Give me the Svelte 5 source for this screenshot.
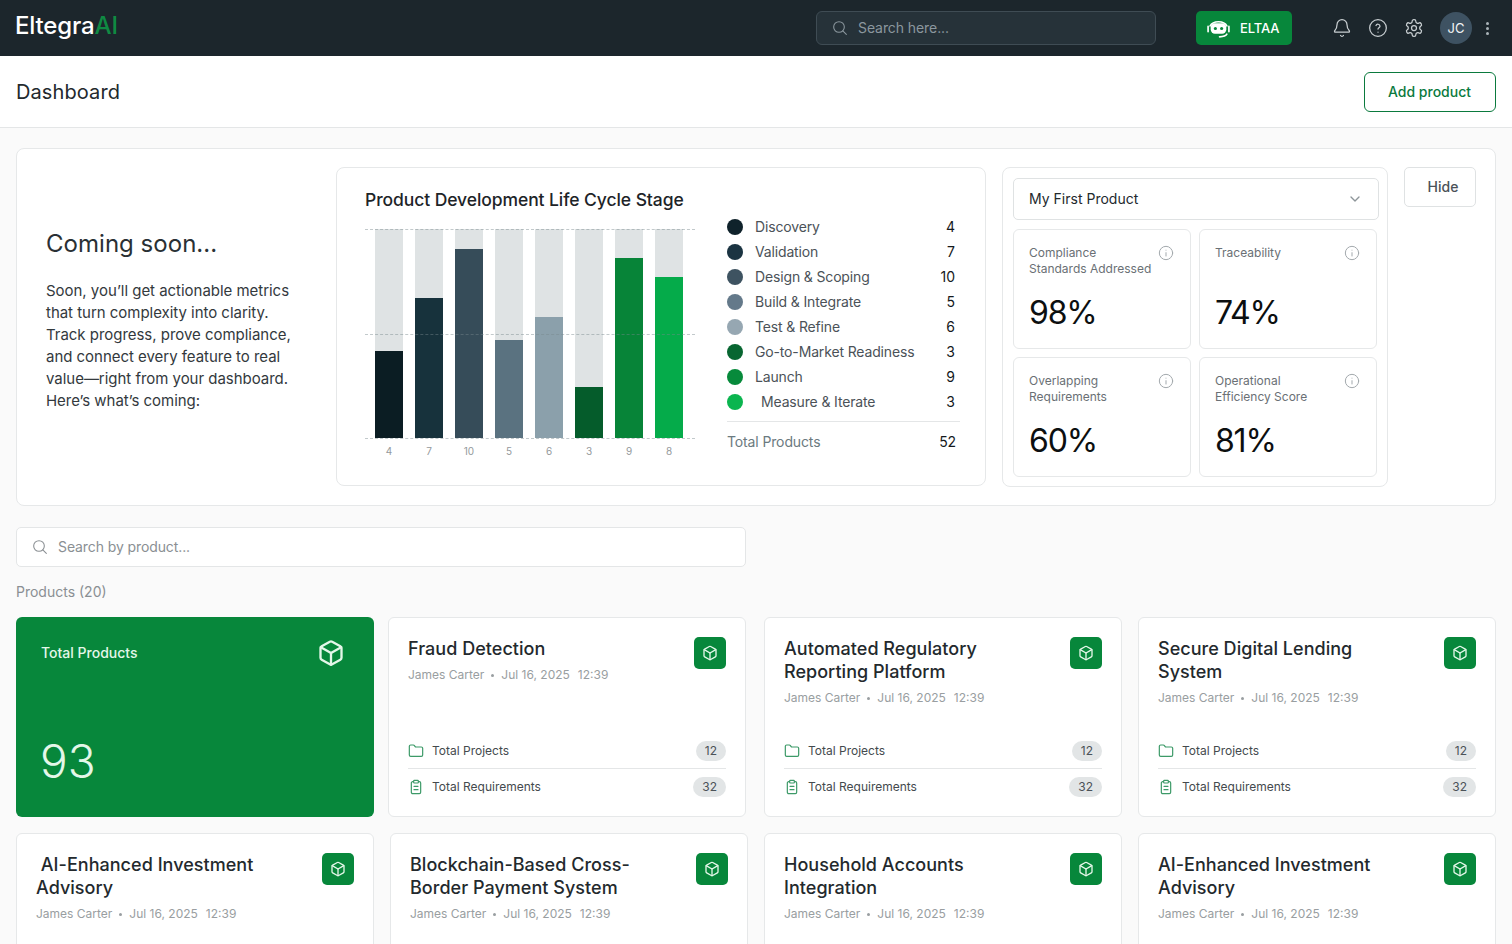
<script>
  const stages = [
    { name: 'Discovery', value: 4, fill: 87, bar: '#0b1d23', dot: '#0f222b' },
    { name: 'Validation', value: 7, fill: 140, bar: '#17323c', dot: '#1b3442' },
    { name: 'Design & Scoping', value: 10, fill: 189, bar: '#364c59', dot: '#3e5361' },
    { name: 'Build & Integrate', value: 5, fill: 98, bar: '#5a7280', dot: '#64798a' },
    { name: 'Test & Refine', value: 6, fill: 121, bar: '#8ba0ab', dot: '#96a7b2' },
    { name: 'Go-to-Market Readiness', value: 3, fill: 51, bar: '#055c2b', dot: '#086631' },
    { name: 'Launch', value: 9, fill: 180, bar: '#078438', dot: '#078a3b' },
    { name: 'Measure & Iterate', value: 3, axis: 8, fill: 161, bar: '#05ab4a', dot: '#0bb54f', cls: 'indented' }
  ];
  const metrics = [
    { label: ['Compliance', 'Standards Addressed'], value: '98%' },
    { label: ['Traceability'], value: '74%' },
    { label: ['Overlapping', 'Requirements'], value: '60%' },
    { label: ['Operational', 'Efficiency Score'], value: '81%' }
  ];
  const rowOne = [
    { title: 'Fraud Detection', cls: 'gap-14' },
    { title: 'Automated Regulatory Reporting Platform', cls: 'gap-18' },
    { title: 'Secure Digital Lending System', cls: 'gap-16' }
  ];
  const rowTwo = [
    { title: '\u00a0AI-Enhanced Investment Advisory', cls: '' },
    { title: 'Blockchain-Based Cross-Border Payment System', cls: '' },
    { title: 'Household Accounts Integration', cls: '' },
    { title: 'AI-Enhanced Investment Advisory', cls: '' }
  ];
</script>

{#snippet box(size)}
  <svg width={size} height={size} viewBox="0 0 24 24" fill="none" stroke="currentColor" stroke-width="2" stroke-linecap="round" stroke-linejoin="round">
    <path d="M21 8a2 2 0 0 0-1-1.730l-7-4a2 2 0 0 0-2 0l-7 4A2 2 0 0 0 3 8v8a2 2 0 0 0 1 1.730l7 4a2 2 0 0 0 2 0l7-4A2 2 0 0 0 21 16Z"/>
    <path d="m3.300 7 8.700 5 8.700-5"/><path d="M12 22V12"/>
  </svg>
{/snippet}

{#snippet searchIcon(size)}
  <svg width={size} height={size} viewBox="0 0 24 24" fill="none" stroke="currentColor" stroke-width="1.6" stroke-linecap="round" stroke-linejoin="round">
    <circle cx="10.500" cy="10.500" r="8"/><path d="m21.500 21.500-5.300-5.300"/>
  </svg>
{/snippet}

{#snippet card(p)}
  <article class="card {p.cls}">
    <div class="card-head">
      <div>
        <h3>{p.title}</h3>
        <p class="meta"><span>James Carter</span><i></i><span>Jul 16, 2025</span><span class="time">12:39</span></p>
      </div>
      <span class="tile">{@render box(16)}</span>
    </div>
    <div class="stats">
      <div class="stat">
        <svg class="stat-icon" width="16" height="16" viewBox="0 0 24 24" fill="none" stroke="currentColor" stroke-width="1.8" stroke-linecap="round" stroke-linejoin="round"><path d="M20 20a2 2 0 0 0 2-2V8a2 2 0 0 0-2-2h-7.900a2 2 0 0 1-1.690-.9L9.600 3.900A2 2 0 0 0 7.930 3H4a2 2 0 0 0-2 2v13a2 2 0 0 0 2 2Z"/></svg>
        <span>Total Projects</span><b>12</b>
      </div>
      <div class="stat">
        <svg class="stat-icon" width="16" height="16" viewBox="0 0 24 24" fill="none" stroke="currentColor" stroke-width="1.8" stroke-linecap="round" stroke-linejoin="round"><rect x="8.500" y="2" width="7" height="4" rx="1"/><path d="M16 4h1a2 2 0 0 1 2 2v14a2 2 0 0 1-2 2H7a2 2 0 0 1-2-2V6a2 2 0 0 1 2-2h1"/><path d="M9 11h6"/><path d="M9 16h6"/></svg>
        <span>Total Requirements</span><b>32</b>
      </div>
    </div>
  </article>
{/snippet}

<div class="page">
  <header class="topbar">
    <div class="logo">Eltegra<span>AI</span></div>
    <div class="top-search">{@render searchIcon(16)}<span>Search here...</span></div>
    <button class="eltaa">
      <svg width="25" height="21" viewBox="0 0 24 20" fill="none" stroke="#fff" stroke-width="1.600" stroke-linecap="round">
        <path d="M4 7.500a8.500 6 0 0 1 16 0"/>
        <rect x="4.500" y="5" width="15" height="10" rx="4" fill="#fff" stroke="none"/>
        <path d="M2 8v5M22 8v5"/>
        <path d="M20 15.500c-1 2-3 2.500-7 2.500"/>
        <circle cx="9" cy="10" r="1.500" fill="#07873b" stroke="none"/><circle cx="15" cy="10" r="1.500" fill="#07873b" stroke="none"/>
      </svg>
      <span>ELTAA</span>
    </button>
    <div class="top-icons">
      <svg width="20" height="20" viewBox="0 0 24 24" fill="none" stroke="currentColor" stroke-width="1.500" stroke-linecap="round" stroke-linejoin="round"><path d="M10.268 21a2 2 0 0 0 3.464 0"/><path d="M3.262 15.326A1 1 0 0 0 4 17h16a1 1 0 0 0 .740-1.673C19.410 13.956 18 12.499 18 8A6 6 0 0 0 6 8c0 4.499-1.411 5.956-2.738 7.326"/></svg>
      <svg width="20" height="20" viewBox="0 0 24 24" fill="none" stroke="currentColor" stroke-width="1.500" stroke-linecap="round" stroke-linejoin="round"><circle cx="12" cy="12" r="10"/><path d="M9.600 9a2.500 2.500 0 0 1 4.800.8c0 1.700-2.400 2-2.400 3.400"/><path d="M12 17h.01"/></svg>
      <svg width="20" height="20" viewBox="0 0 24 24" fill="none" stroke="currentColor" stroke-width="1.500" stroke-linecap="round" stroke-linejoin="round"><path d="M12.220 2h-.44a2 2 0 0 0-2 2v.18a2 2 0 0 1-1 1.730l-.43.25a2 2 0 0 1-2 0l-.15-.08a2 2 0 0 0-2.730.73l-.22.38a2 2 0 0 0 .73 2.730l.15.1a2 2 0 0 1 1 1.720v.51a2 2 0 0 1-1 1.740l-.15.09a2 2 0 0 0-.73 2.730l.22.38a2 2 0 0 0 2.730.73l.15-.08a2 2 0 0 1 2 0l.43.25a2 2 0 0 1 1 1.730V20a2 2 0 0 0 2 2h.44a2 2 0 0 0 2-2v-.18a2 2 0 0 1 1-1.730l.43-.25a2 2 0 0 1 2 0l.15.08a2 2 0 0 0 2.730-.73l.22-.39a2 2 0 0 0-.73-2.730l-.15-.08a2 2 0 0 1-1-1.740v-.5a2 2 0 0 1 1-1.740l.15-.09a2 2 0 0 0 .73-2.730l-.22-.38a2 2 0 0 0-2.730-.73l-.15.08a2 2 0 0 1-2 0l-.43-.25a2 2 0 0 1-1-1.730V4a2 2 0 0 0-2-2z"/><circle cx="12" cy="12" r="3"/></svg>
    </div>
    <div class="avatar">JC</div>
    <div class="kebab"><i></i><i></i><i></i></div>
  </header>

  <div class="titlebar">
    <h1>Dashboard</h1>
    <button class="add">Add product</button>
  </div>

  <main class="content">
    <section class="panel">
      <div class="intro">
        <h2>Coming soon...</h2>
        <p>Soon, you’ll get actionable metrics that turn complexity into clarity. Track progress, prove compliance, and connect every feature to real value—right from your dashboard. Here’s what’s coming:</p>
      </div>

      <div class="chart-card">
        <div class="chart-side">
          <h3 class="chart-title">Product Development Life Cycle Stage</h3>
          <div class="plot">
            <div class="bars">
              {#each stages as s}
                <div class="track"><div class="fill" style="height:{s.fill}px;background:{s.bar}"></div></div>
              {/each}
            </div>
            <div class="grid-lines"><i></i><i></i><i></i></div>
          </div>
          <div class="axis">
            {#each stages as s}<span>{s.axis ?? s.value}</span>{/each}
          </div>
        </div>
        <div class="legend">
          {#each stages as s}
            <div class="legend-row">
              <i style="background:{s.dot}"></i>
              <span class={s.cls}>{s.name}</span>
              <b>{s.value}</b>
            </div>
          {/each}
          <div class="legend-total"><span>Total Products</span><b>52</b></div>
        </div>
      </div>

      <div class="metrics-card">
        <div class="select">
          <span>My First Product</span>
          <svg width="16" height="16" viewBox="0 0 24 24" fill="none" stroke="#8d9599" stroke-width="2" stroke-linecap="round" stroke-linejoin="round"><path d="m6 9 6 6 6-6"/></svg>
        </div>
        <div class="metrics">
          {#each metrics as m}
            <div class="metric">
              <div class="metric-head">
                <div>{#each m.label as l}<div>{l}</div>{/each}</div>
                <svg width="16" height="16" viewBox="0 0 24 24" fill="none" stroke="#a3a9ad" stroke-width="1.500" stroke-linecap="round"><circle cx="12" cy="12" r="10"/><path d="M12 16.500v-5"/><path d="M12 7.800h.01"/></svg>
              </div>
              <div class="metric-value">{m.value}</div>
            </div>
          {/each}
        </div>
      </div>

      <button class="hide">Hide</button>
    </section>

    <div class="product-search">{@render searchIcon(16)}<span>Search by product...</span></div>
    <div class="count">Products (20)</div>

    <div class="row">
      <article class="total">
        <div class="total-head"><span>Total Products</span>{@render box(28)}</div>
        <div class="total-value">93</div>
      </article>
      {#each rowOne as p}{@render card(p)}{/each}
    </div>
    <div class="row second">
      {#each rowTwo as p}{@render card(p)}{/each}
    </div>
  </main>
</div>

<style>
  :global(body) { margin: 0; background: #fafafa; }
  * { box-sizing: border-box; }
  .page { height: 944px; overflow: hidden; font-family: Inter, "Liberation Sans", sans-serif; color: #23292d; background: #fafafa; }
  h1, h2, h3, p { margin: 0; }
  button { font-family: inherit; cursor: pointer; }

  .topbar { height: 56px; background: #1c262c; display: flex; align-items: center; padding: 0 20px 0 15px; }
  .logo { font-size: 24px; font-weight: 500; color: #fff; letter-spacing: -0.15px; width: 801px; padding-bottom: 6px; }
  .logo span { color: #0f8a43; }
  .top-search { width: 340px; height: 34px; display: flex; align-items: center; gap: 10px; padding: 0 0 1px 15px; background: #263239; border: 1px solid #3f4c54; border-radius: 6px; color: #8b979e; font-size: 14px; letter-spacing: -0.08px; }
  .eltaa { margin-left: 40px; width: 96px; height: 34px; border: 0; border-radius: 5px; background: #07873b; color: #fff; display: flex; align-items: center; gap: 9px; padding: 0 0 0 10px; font-size: 13px; font-weight: 500; letter-spacing: -0.1px; }
  .top-icons { margin-left: 40px; display: flex; gap: 16px; color: #c8ced1; }
  .avatar { margin-left: 16px; width: 32px; height: 32px; border-radius: 50%; background: #3e5262; color: #f2f4f5; display: flex; align-items: center; justify-content: center; font-size: 13px; font-weight: 400; }
  .kebab { margin-left: 14px; display: flex; flex-direction: column; gap: 2px; }
  .kebab i { width: 3px; height: 3px; border-radius: 50%; background: #aab3b8; }

  .titlebar { height: 72px; background: #fff; border-bottom: 1px solid #e4e6e7; display: flex; align-items: center; justify-content: space-between; padding: 0 16px; }
  h1 { font-size: 20px; font-weight: 400; color: #23292d; letter-spacing: 0.1px; }
  .add { width: 132px; height: 40px; padding: 0 1px 0 0; background: #fff; border: 1px solid #0b7a3e; border-radius: 6px; color: #0b7a3e; font-size: 14px; font-weight: 500; }

  .content { padding: 20px 16px 0; }
  .panel { height: 358px; background: #fff; border: 1px solid #e6e8e9; border-radius: 8px; padding: 18px 19px 0 0; display: flex; align-items: flex-start; }
  .intro { width: 319px; flex: none; padding: 62px 29px 0 29px; }
  .intro h2 { font-size: 24px; font-weight: 400; line-height: 29px; color: #2a3034; letter-spacing: 0.03px; }
  .intro p { margin-top: 22px; font-size: 15px; line-height: 22px; color: #33393d; letter-spacing: -0.03px; }

  .chart-card { width: 650px; height: 319px; flex: none; border: 1px solid #e6e8e9; border-radius: 8px; padding: 20px 25px 0 28px; display: flex; gap: 32px; }
  .chart-side { width: 330px; flex: none; }
  .chart-title { font-size: 17.5px; font-weight: 500; line-height: 24px; white-space: nowrap; color: #1d2428; letter-spacing: -0.08px; }
  .plot { position: relative; height: 210px; margin-top: 17px; }
  .bars { display: flex; gap: 12px; padding-left: 10px; }
  .track { width: 28px; height: 209px; background: #dfe3e4; display: flex; align-items: flex-end; }
  .fill { width: 100%; }
  .grid-lines { position: absolute; inset: 0; display: flex; flex-direction: column; justify-content: space-between; }
  .grid-lines i { border-top: 1px dashed rgba(120,135,140,.45); }
  .axis { display: flex; gap: 12px; padding-left: 10px; margin-top: 6px; }
  .axis span { width: 28px; text-align: center; font-size: 10px; line-height: 12px; color: #94999c; }

  .legend { width: 233px; padding-top: 26px; flex: none; }
  .legend-row { display: flex; align-items: center; height: 25px; font-size: 14px; color: #4b5258; padding-right: 5px; }
  .legend-row i { width: 16px; height: 16px; border-radius: 50%; margin-right: 12px; }
  .legend-row span { letter-spacing: -0.15px; }
  .legend-row .indented { padding-left: 6px; }
  .legend-row b, .legend-total b { margin-left: auto; font-weight: 400; color: #15191c; }
  .legend-total { display: flex; align-items: center; margin-top: 7px; height: 40px; border-top: 1px solid #e4e6e7; font-size: 14px; color: #6b7a80; padding-right: 4px; letter-spacing: -0.13px; }

  .metrics-card { margin-left: 16px; width: 386px; height: 320px; flex: none; border: 1px solid #e6e8e9; border-radius: 8px; padding: 10px; }
  .select { width: 366px; height: 42px; border: 1px solid #dfe2e3; border-radius: 5px; display: flex; align-items: center; justify-content: space-between; padding: 0 15px 2px; font-size: 14px; color: #23292d; letter-spacing: 0.01px; }
  .select svg { margin-top: 2px; }
  .metrics { margin-top: 9px; display: grid; grid-template-columns: 178px 178px; grid-auto-rows: 120px; gap: 8px; }
  .metric { border: 1px solid #e6e8e9; border-radius: 6px; padding: 15px 15px 0; display: flex; flex-direction: column; }
  .metric-head { display: flex; justify-content: space-between; font-size: 12px; line-height: 16px; color: #6a7075; height: 32px; }
  .metric-head svg { margin: 0 1px 0 0; flex: none; }
  .metric-value { margin-top: 15px; font-size: 32px; line-height: 42px; color: #0c0f10; letter-spacing: -1.2px; }

  .hide { margin-left: 16px; width: 72px; height: 40px; padding: 0 0 2px 6px; background: #fff; border: 1px solid #dfe2e3; border-radius: 5px; color: #4b5258; font-size: 14px; font-weight: 500; }

  .product-search { margin-top: 21px; width: 730px; height: 40px; background: #fff; border: 1px solid #e4e6e7; border-radius: 5px; display: flex; align-items: center; gap: 10px; padding: 0 0 1px 15px; font-size: 14px; color: #8a8f93; letter-spacing: -0.1px; }
  .count { margin-top: 16px; font-size: 14px; line-height: 18px; color: #8a8f93; }

  .row { display: flex; margin-top: 16px; }
  .row.second { gap: 16px; }
  .total { width: 358px; height: 200px; flex: none; background: #07873b; border-radius: 6px; padding: 21px 29px 0 25px; color: #e4f7e9; display: flex; flex-direction: column; }
  .total-head { display: flex; justify-content: space-between; align-items: center; font-size: 14px; font-weight: 500; height: 30px; }
  .total-head span { margin-bottom: 2px; }
  .total-value { margin: 65px 0 0 -1px; font-size: 46px; line-height: 56px; font-weight: 300; }

  .card { width: 358px; height: 200px; flex: none; background: #fff; border: 1px solid #e6e8e9; border-radius: 6px; padding: 19px 19px 0; display: flex; flex-direction: column; }
  .gap-14 { margin-left: 14px; }
  .gap-18 { margin-left: 18px; }
  .gap-16 { margin-left: 16px; }
  .card-head { display: flex; justify-content: space-between; align-items: flex-start; height: 96px; }
  .card h3 { font-size: 18px; font-weight: 500; line-height: 23px; width: 240px; color: #23292d; letter-spacing: 0.03px; }
  .meta { display: flex; align-items: center; margin-top: 7px; font-size: 12px; line-height: 16px; color: #999ea1; }
  .meta i { width: 3px; height: 3px; border-radius: 50%; background: #999ea1; margin: 0 7px; }
  .time { margin-left: 8px; }
  .tile { width: 32px; height: 32px; flex: none; background: #07873b; border-radius: 5px; color: #e4f7e9; display: flex; align-items: center; justify-content: center; }
  .stat { height: 35px; display: flex; align-items: center; font-size: 12px; color: #444a4e; }
  .stat + .stat { height: 36px; border-top: 1px solid #e4e6e7; }
  .stat-icon { color: #3d9a68; margin-right: 8px; flex: none; }
  .stat b { margin-left: auto; min-width: 30px; height: 20px; padding: 0 9px; border-radius: 10px; background: #e2e5e6; font-weight: 400; text-align: center; line-height: 20px; color: #4b5258; }
</style>
